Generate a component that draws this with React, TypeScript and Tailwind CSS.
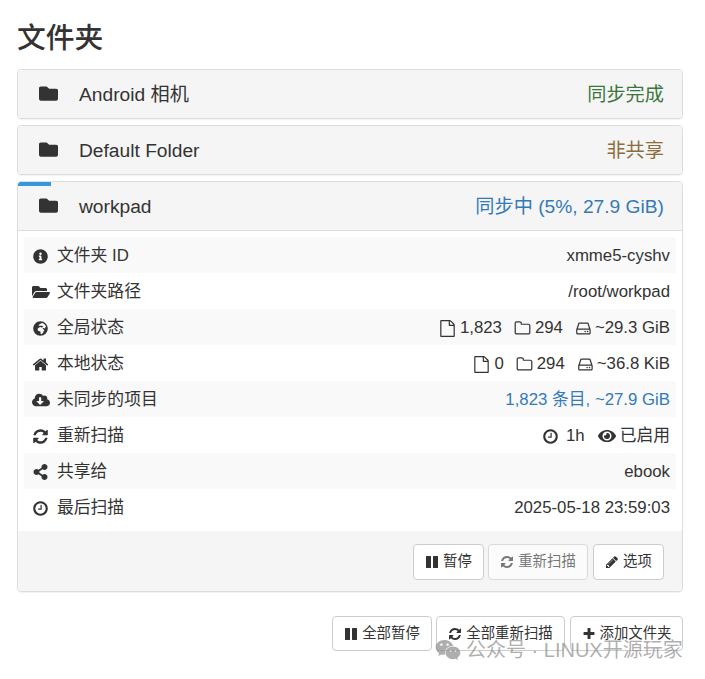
import React from 'react';
import {
  FaCloudDownloadAlt,
  FaEye,
  FaFolder,
  FaFolderOpen,
  FaGlobeAfrica,
  FaInfoCircle,
  FaShareAlt,
  FaWeixin,
} from 'react-icons/fa';

// Font Awesome 4 glyphs that react-icons no longer ships, on their 1792 grid
const paths = {
  refresh:
    'M1639 1056q0 5-1 7-64 268-268 434.5t-478 166.5q-146 0-282.5-55t-243.5-157l-129 129q-19 19-45 19t-45-19-19-45v-448q0-26 19-45t45-19h448q26 0 45 19t19 45-19 45l-137 137q71 66 161 102t187 36q134 0 250-65t186-179q11-17 53-117 8-23 30-23h192q13 0 22.5 9.5t9.5 22.5zm25-800v448q0 26-19 45t-45 19h-448q-26 0-45-19t-19-45 19-45l138-138q-148-137-349-137-134 0-250 65t-186 179q-11 17-53 117-8 23-30 23h-199q-13 0-22.5-9.5t-9.5-22.5v-7q65-268 270-434.5t480-166.5q146 0 284 55.5t245 156.5l130-129q19-19 45-19t45 19 19 45z',
  home:
    'M1472 992v480q0 26-19 45t-45 19h-384v-384h-256v384h-384q-26 0-45-19t-19-45v-480q0-1 .5-3t.5-3l575-474 575 474q1 2 1 6zm223-69l-62 74q-8 9-21 11h-3q-13 0-21-7l-692-577-692 577q-12 8-24 7-13-2-21-11l-62-74q-8-10-7-23.5t11-21.5l719-599q32-26 76-26t76 26l244 204v-195q0-14 9-23t23-9h192q14 0 23 9t9 23v408l219 182q10 8 11 21.5t-7 23.5z',
  pause:
    'M1664 192v1408q0 26-19 45t-45 19h-512q-26 0-45-19t-19-45v-1408q0-26 19-45t45-19h512q26 0 45 19t19 45zm-896 0v1408q0 26-19 45t-45 19h-512q-26 0-45-19t-19-45v-1408q0-26 19-45t45-19h512q26 0 45 19t19 45z',
  plus:
    'M1600 736v192q0 40-28 68t-68 28h-416v416q0 40-28 68t-68 28h-192q-40 0-68-28t-28-68v-416h-416q-40 0-68-28t-28-68v-192q0-40 28-68t68-28h416v-416q0-40 28-68t68-28h192q40 0 68 28t28 68v416h416q40 0 68 28t28 68z',
  clock:
    'M1024 544v448q0 14-9 23t-23 9h-320q-14 0-23-9t-9-23v-64q0-14 9-23t23-9h224v-352q0-14 9-23t23-9h64q14 0 23 9t9 23zm416 352q0-148-73-273t-198-198-273-73-273 73-198 198-73 273 73 273 198 198 273 73 273-73 198-198 73-273zm224 0q0 209-103 385.5t-279.5 279.5-385.5 103-385.5-103-279.5-279.5-103-385.5 103-385.5 279.5-279.5 385.5-103 385.5 103 279.5 279.5 103 385.5z',
  pencil:
    'M491 1536l91-91-235-235-91 91v107h128v128h107zm523-928q0-22-22-22-10 0-17 7l-542 542q-7 7-7 17 0 22 22 22 10 0 17-7l542-542q7-7 7-17zm-54-192l416 416-832 832h-416v-416zm683 96q0 53-37 90l-166 166-416-416 166-165q36-38 90-38 53 0 91 38l235 234q37 39 37 91z',
  file:
    'M1596 380q28 28 48 76t20 88v1152q0 40-28 68t-68 28h-1344q-40 0-68-28t-28-68v-1600q0-40 28-68t68-28h896q40 0 88 20t76 48zm-444-244v376h376q-10-29-22-41l-313-313q-12-12-41-22zm384 1528v-1024h-416q-40 0-68-28t-28-68v-416h-768v1536h1280z',
  folderO:
    'M1600 1312v-704q0-40-28-68t-68-28h-704q-40 0-68-28t-28-68v-64q0-40-28-68t-68-28h-320q-40 0-68 28t-28 68v960q0 40 28 68t68 28h1216q40 0 68-28t28-68zm128-704v704q0 92-66 158t-158 66h-1216q-92 0-158-66t-66-158v-960q0-92 66-158t158-66h320q92 0 158 66t66 158v32h672q92 0 158 66t66 158z',
  hdd:
    'M1040 1216q0 33-23.5 56.5t-56.5 23.5-56.5-23.5-23.5-56.5 23.5-56.5 56.5-23.5 56.5 23.5 23.5 56.5zm256 0q0 33-23.5 56.5t-56.5 23.5-56.5-23.5-23.5-56.5 23.5-56.5 56.5-23.5 56.5 23.5 23.5 56.5zm128 160v-320q0-13-9.5-22.5t-22.5-9.5h-1216q-13 0-22.5 9.5t-9.5 22.5v320q0 13 9.5 22.5t22.5 9.5h1216q13 0 22.5-9.5t9.5-22.5zm-1230-480h1180l-157-482q-4-13-16-21.5t-26-8.5h-782q-14 0-26 8.5t-16 21.5zm1358 160v320q0 66-47 113t-113 47h-1216q-66 0-113-47t-47-113v-320q0-25 16-75l197-606q17-53 63-86t101-33h782q55 0 101 33t63 86l197 606q16 50 16 75z',
};

const Fa4: React.FC<{ d: string; className: string }> = ({ d, className }) => (
  <svg viewBox="0 0 1792 1792" fill="currentColor" className={`shrink-0 ${className}`}>
    <path d={d} />
  </svg>
);

const FolderHeading: React.FC<{ name: string; status: React.ReactNode; className: string }> = ({
  name,
  status,
  className,
}) => (
  <div className="flex h-[48px] items-center bg-[#f5f5f5] pl-[21px] pr-[18px] pt-[2px] text-[19.2px]">
    <FaFolder className="w-[19px] h-[19px] shrink-0 -mt-[3px]" />
    <span className="ml-[21px] flex-1">{name}</span>
    <span className={className}>{status}</span>
  </div>
);

const Counts: React.FC<{ files: string; dirs: string; size: string }> = ({ files, dirs, size }) => (
  <span className="flex items-center">
    <Fa4 d={paths.file} className="w-[17px] h-[17px] mr-[4px]" />
    {files}
    <Fa4 d={paths.folderO} className="w-[17px] h-[17px] ml-[12px] mr-[4px]" />
    {dirs}
    <Fa4 d={paths.hdd} className="w-[17px] h-[17px] ml-[13px] mr-[2px]" />
    {size}
  </span>
);

const rows: { icon: React.ReactNode; label: string; value: React.ReactNode }[] = [
  { icon: <FaInfoCircle className="w-[15px] h-[15px]" />, label: '文件夹 ID', value: 'xmme5-cyshv' },
  { icon: <FaFolderOpen className="w-[18px] h-[16px]" />, label: '文件夹路径', value: '/root/workpad' },
  {
    icon: <FaGlobeAfrica className="w-[15px] h-[15px]" />,
    label: '全局状态',
    value: <Counts files="1,823" dirs="294" size="~29.3 GiB" />,
  },
  {
    icon: <Fa4 d={paths.home} className="w-[17px] h-[17px]" />,
    label: '本地状态',
    value: <Counts files="0" dirs="294" size="~36.8 KiB" />,
  },
  {
    icon: <FaCloudDownloadAlt className="w-[18px] h-[16px]" />,
    label: '未同步的项目',
    value: <span className="text-[#337ab7]">1,823 条目, ~27.9 GiB</span>,
  },
  {
    icon: <Fa4 d={paths.refresh} className="w-[17px] h-[17px]" />,
    label: '重新扫描',
    value: (
      <span className="flex items-center">
        <Fa4 d={paths.clock} className="w-[17px] h-[17px] mr-[7px]" />
        1h
        <FaEye className="w-[18px] h-[16px] ml-[13px] mr-[4px]" />
        已启用
      </span>
    ),
  },
  { icon: <FaShareAlt className="w-[15px] h-[16px]" />, label: '共享给', value: 'ebook' },
  { icon: <Fa4 d={paths.clock} className="w-[17px] h-[17px]" />, label: '最后扫描', value: '2025-05-18 23:59:03' },
];

const Btn: React.FC<{ icon: React.ReactNode; children: React.ReactNode; disabled?: boolean; className: string }> = ({
  icon,
  children,
  disabled,
  className,
}) => (
  <button
    className={`flex items-center justify-center gap-[4px] rounded-[4px] border border-[#ccc] bg-white text-[14.4px] text-[#333] ${className} ${
      disabled ? 'opacity-65' : ''
    }`}
  >
    {icon}
    {children}
  </button>
);

export default function App() {
  return (
    <div
      className="relative h-[679px] overflow-hidden bg-white pl-[17px] pr-[22px] text-[#333]"
      style={{ fontFamily: '"Liberation Sans", "Noto Sans CJK SC", sans-serif' }}
    >
      <h3 className="pt-[21px] pb-[13px] text-[28.8px] leading-[35px] font-medium">文件夹</h3>

      <div className="flex flex-col gap-[6px]">
        <div className="overflow-hidden rounded-[4px] border border-[#ddd] shadow-[0_1px_1px_rgba(0,0,0,0.05)]">
          <FolderHeading name="Android 相机" status="同步完成" className="text-[#3c763d]" />
        </div>
        <div className="overflow-hidden rounded-[4px] border border-[#ddd] shadow-[0_1px_1px_rgba(0,0,0,0.05)]">
          <FolderHeading name="Default Folder" status="非共享" className="text-[#8a6d3b]" />
        </div>

        <div className="relative overflow-hidden rounded-[4px] border border-[#ddd] shadow-[0_1px_1px_rgba(0,0,0,0.05)]">
          <div className="absolute left-0 top-0 h-[4px] w-[33px] bg-[#3498db]" />
          <FolderHeading name="workpad" status="同步中 (5%, 27.9 GiB)" className="text-[#337ab7]" />
          <div className="border-t border-[#ddd] px-[6px] pt-[6px] pb-[6px]">
            {rows.map((row, index) => (
              <div
                key={row.label}
                className={`flex h-[36px] items-center justify-between pr-[6px] pt-[2px] text-[16.8px] ${
                  index % 2 === 0 ? 'bg-[#f9f9f9]' : ''
                }`}
              >
                <span className="flex items-center">
                  <span className="flex w-[33px] justify-center">{row.icon}</span>
                  {row.label}
                </span>
                {row.value}
              </div>
            ))}
          </div>
          <div className="flex h-[60px] items-center justify-end gap-[4px] border-t border-[#f5f5f5] bg-[#f5f5f5] pr-[18px]">
            <Btn icon={<Fa4 d={paths.pause} className="w-[14px] h-[14px]" />} className="w-[71px] h-[36px]">
              暂停
            </Btn>
            <Btn icon={<Fa4 d={paths.refresh} className="w-[14px] h-[14px]" />} disabled className="w-[100px] h-[36px]">
              重新扫描
            </Btn>
            <Btn icon={<Fa4 d={paths.pencil} className="w-[14px] h-[14px]" />} className="w-[71px] h-[36px] ml-[1px]">
              选项
            </Btn>
          </div>
        </div>
      </div>

      <div className="mt-[24px] flex justify-end gap-[4px]">
        <Btn icon={<Fa4 d={paths.pause} className="w-[14px] h-[14px]" />} className="w-[100px] h-[35px]">
          全部暂停
        </Btn>
        <Btn icon={<Fa4 d={paths.refresh} className="w-[14px] h-[14px]" />} className="w-[129px] h-[35px]">
          全部重新扫描
        </Btn>
        <Btn icon={<Fa4 d={paths.plus} className="w-[14px] h-[14px]" />} className="w-[113px] h-[35px] ml-[1px]">
          添加文件夹
        </Btn>
      </div>

      <div className="absolute left-[435px] top-[638px] flex items-center gap-[5px] text-[20px] leading-[24px] text-[#8c8c8c]/70">
        <FaWeixin className="w-[26px] h-[24px]" />
        <span>公众号 · LINUX开源玩家</span>
      </div>
    </div>
  );
}
